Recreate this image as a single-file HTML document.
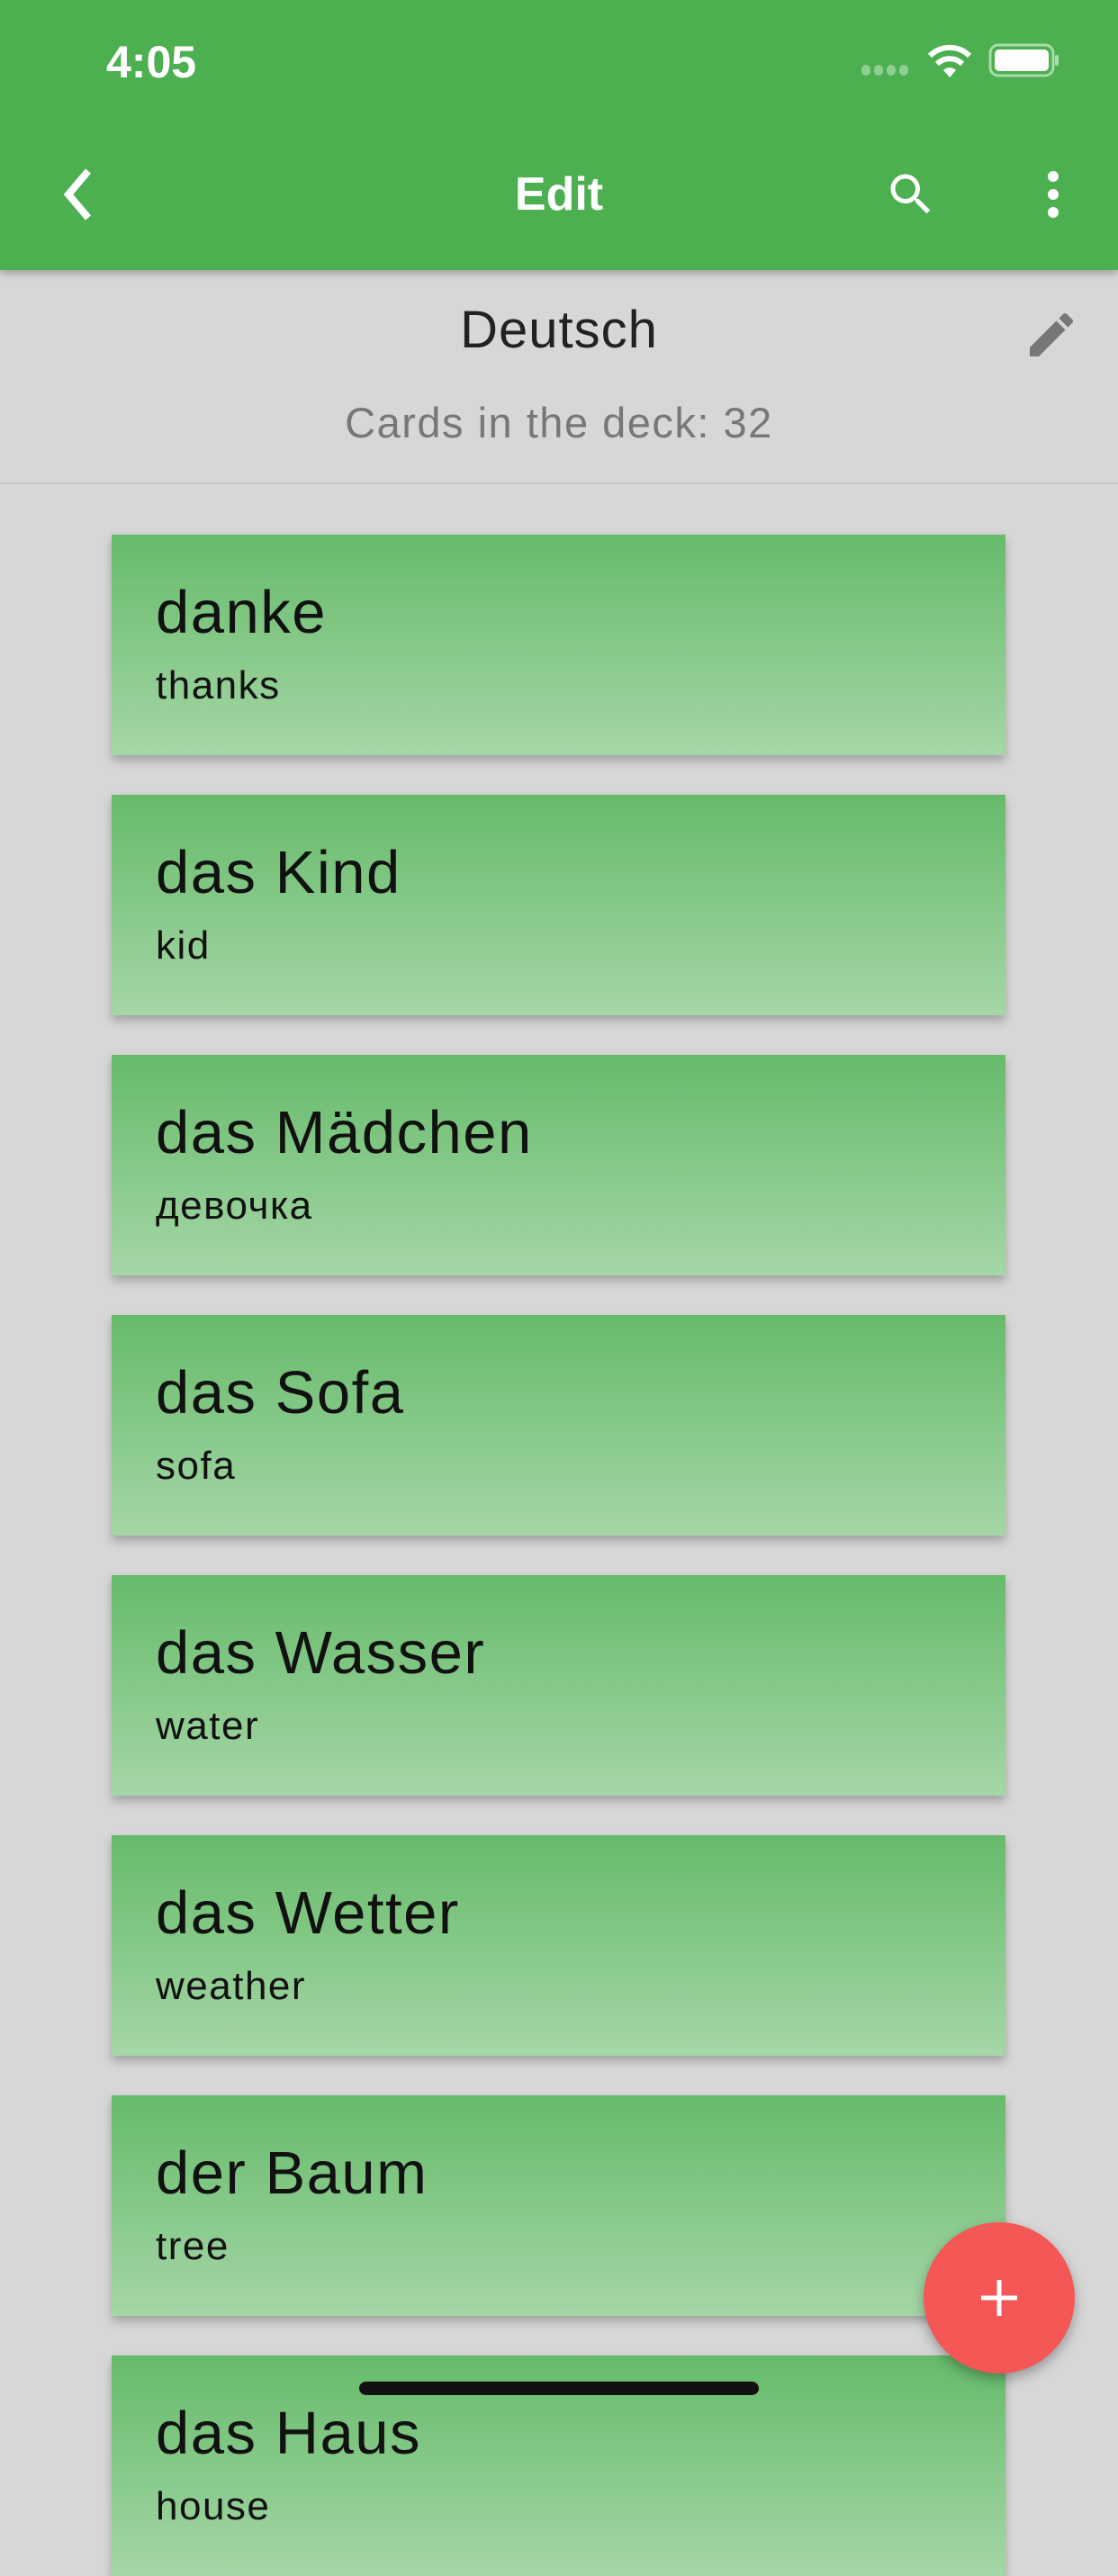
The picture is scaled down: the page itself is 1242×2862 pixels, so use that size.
<!DOCTYPE html>
<html><head><meta charset="utf-8"><style>
*{margin:0;padding:0;box-sizing:border-box}
body{width:1242px;height:2688px;background:#d7d7d7;font-family:"Liberation Sans",sans-serif;position:relative;overflow:hidden}
.bar{position:absolute;left:0;top:0;width:1242px;height:300px;background:#4caf50;box-shadow:0 4px 8px rgba(0,0,0,.25);z-index:2}
.time{position:absolute;left:118px;top:40px;color:#fff;font-size:50px;font-weight:bold}
.title{position:absolute;left:0;width:1242px;top:186px;text-align:center;color:#fff;font-size:52px;font-weight:bold}
.deck{position:absolute;top:333px;width:1242px;text-align:center;font-size:58px;color:#222;letter-spacing:1px}
.count{position:absolute;top:442px;width:1242px;text-align:center;font-size:47px;color:#777;letter-spacing:1.5px}
.div{position:absolute;top:536px;left:0;width:1242px;height:2px;background:#c8c8c8}
.card{position:absolute;left:124px;width:993px;height:245px;background:linear-gradient(#66bb6a,#a5d6a7);box-shadow:0 6px 10px rgba(0,0,0,.25)}
.card .t{position:absolute;left:49px;top:48px;font-size:67px;color:#111;letter-spacing:1.5px}
.card .s{position:absolute;left:49px;top:143px;font-size:44px;color:#111;letter-spacing:1.5px}
.fab{position:absolute;left:1026px;top:2469px;width:168px;height:168px;border-radius:50%;background:#f55656;box-shadow:0 6px 14px rgba(0,0,0,.3)}
.home{position:absolute;left:399px;top:2646px;width:444px;height:15px;border-radius:8px;background:#111}
</style></head><body>
<div class="bar">
<div class="time">4:05</div>
<svg style="position:absolute;left:955px;top:70px" width="56" height="16"><g fill="#8fd092"><rect x="2" y="2" width="10" height="12" rx="5"/><rect x="16" y="2" width="10" height="12" rx="5"/><rect x="30" y="2" width="10" height="12" rx="5"/><rect x="44" y="2" width="10" height="12" rx="5"/></g></svg>
<svg style="position:absolute;left:1028px;top:46px" width="54" height="42" viewBox="0 0 54 42"><path d="M27 40 L20 32 A10 10 0 0 1 34 32 Z" fill="#fff"/><path d="M13 25 A20 20 0 0 1 41 25" stroke="#fff" stroke-width="6" fill="none"/><path d="M5 16 A31 31 0 0 1 49 16" stroke="#fff" stroke-width="6" fill="none"/></svg>
<svg style="position:absolute;left:1098px;top:48px" width="80" height="40"><rect x="2" y="2" width="70" height="34" rx="9" fill="none" stroke="#a8dcaa" stroke-width="3"/><rect x="7" y="7" width="60" height="24" rx="5" fill="#fff"/><rect x="74" y="13" width="4" height="12" rx="2" fill="#a8dcaa"/></svg>
<svg style="position:absolute;left:62px;top:186px" width="50" height="60"><path d="M36 4 L14 30 L36 56" stroke="#fff" stroke-width="8" fill="none"/></svg>
<div class="title">Edit</div>
<svg style="position:absolute;left:982px;top:186px" width="60" height="60" viewBox="0 0 24 24"><path fill="#fff" d="M15.5 14h-.79l-.28-.27A6.470 6.470 0 0 0 16 9.5 6.5 6.5 0 1 0 9.5 16c1.61 0 3.090-.59 4.230-1.57l.27.28v.79l5 4.99L20.49 19l-4.99-5zm-6 0C7.01 14 5 11.99 5 9.5S7.01 5 9.5 5 14 7.01 14 9.5 11.99 14 9.5 14z"/></svg>
<svg style="position:absolute;left:1150px;top:186px" width="40" height="60"><g fill="#fff"><circle cx="20" cy="10" r="6"/><circle cx="20" cy="30" r="6"/><circle cx="20" cy="50" r="6"/></g></svg>
</div>
<div class="deck">Deutsch</div>
<svg style="position:absolute;left:1136px;top:340px" width="64" height="64" viewBox="0 0 24 24"><path fill="#777" d="M3 17.25V21h3.75L17.81 9.94l-3.75-3.75L3 17.25zM20.71 7.04a1 1 0 0 0 0-1.41l-2.34-2.34a1 1 0 0 0-1.41 0l-1.830 1.83 3.75 3.75 1.83-1.83z"/></svg>
<div class="count">Cards in the deck: 32</div>
<div class="div"></div>
<div class="card" style="top:594px"><div class="t">danke</div><div class="s">thanks</div></div>
<div class="card" style="top:883px"><div class="t">das Kind</div><div class="s">kid</div></div>
<div class="card" style="top:1172px"><div class="t">das Mädchen</div><div class="s">девочка</div></div>
<div class="card" style="top:1461px"><div class="t">das Sofa</div><div class="s">sofa</div></div>
<div class="card" style="top:1750px"><div class="t">das Wasser</div><div class="s">water</div></div>
<div class="card" style="top:2039px"><div class="t">das Wetter</div><div class="s">weather</div></div>
<div class="card" style="top:2328px"><div class="t">der Baum</div><div class="s">tree</div></div>
<div class="card" style="top:2617px"><div class="t">das Haus</div><div class="s">house</div></div>
<div class="fab"><svg style="position:absolute;left:62px;top:62px" width="44" height="44"><path d="M22 2V42M2 22H42" stroke="#fff" stroke-width="5"/></svg></div>
<div class="home"></div>
</body></html>
